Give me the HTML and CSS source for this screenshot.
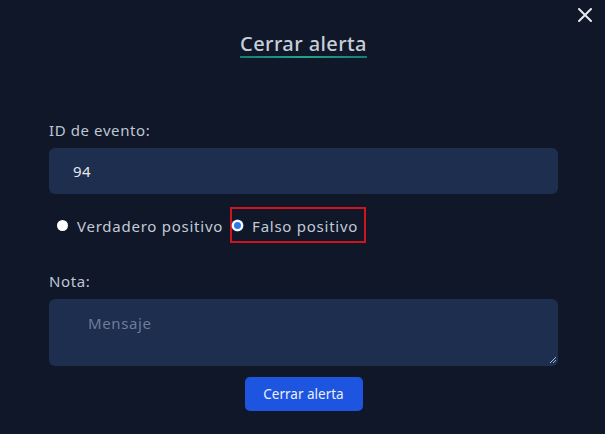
FILE: index.html
```html
<!DOCTYPE html>
<html lang="es">
<head>
<meta charset="utf-8">
<link rel="stylesheet" href="styles.css">
</head>
<body>
<div class="modal">
  <button class="close" aria-label="Cerrar">
    <svg width="14" height="14" viewBox="0 0 14 14"><path d="M1 1L13 13M13 1L1 13" stroke="#e6e9ef" stroke-width="2" stroke-linecap="round"/></svg>
  </button>
  <h2 class="title">Cerrar alerta</h2>
  <form class="form">
    <label class="label">ID de evento:</label>
    <div class="input">94</div>
    <div class="radios">
      <label class="radio"><span class="dot dot-white"></span>Verdadero positivo</label>
      <label class="radio radio-marked"><span class="dot dot-blue"></span>Falso positivo</label>
    </div>
    <label class="label label-note">Nota:</label>
    <div class="textarea">
      <span class="placeholder">Mensaje</span>
      <svg class="grip" width="8" height="8" viewBox="0 0 8 8"><path d="M7 1L1 7M7 4L4 7" stroke="#a9b3c6" stroke-width="1"/></svg>
    </div>
    <div class="actions">
      <button type="button" class="btn">Cerrar alerta</button>
    </div>
  </form>
</div>
</body>
</html>
```
FILE: styles.css
```css
* { box-sizing: border-box; }
html, body { margin: 0; padding: 0; }
body {
  width: 605px;
  height: 434px;
  background: #0f1729;
  font-family: "Noto Sans", "Open Sans", sans-serif;
  color: #c9cfda;
  overflow: hidden;
}
.modal {
  position: relative;
  padding: 31px 47px 0 49px;
}
.close {
  position: absolute;
  top: 8px;
  right: 13px;
  width: 14px;
  height: 14px;
  padding: 0;
  border: 0;
  background: none;
  display: flex;
}
.title {
  margin: 0 auto;
  width: max-content;
  font-size: 20px;
  font-weight: 500;
  color: #c8ced8;
  letter-spacing: 0.4px;
  line-height: 25px;
  border-bottom: 2px solid transparent;
  border-image: linear-gradient(90deg, #177d72, #22a38d, #177d72) 1;
}
.form {
  display: flex;
  flex-direction: column;
  margin-top: 62px;
}
.label {
  font-size: 15px;
  line-height: 20px;
  letter-spacing: 0.6px;
  color: #bfc6d2;
}
.input {
  margin-top: 8px;
  height: 46px;
  background: #1e2e4e;
  border-radius: 6px;
  padding: 0 24px;
  display: flex;
  align-items: center;
  font-size: 15px;
  letter-spacing: 0.5px;
  color: #e6e9ee;
}
.radios {
  display: flex;
  align-items: center;
  margin-top: 13px;
  margin-left: 8px;
  height: 36px;
}
.radio {
  display: flex;
  align-items: center;
  gap: 9px;
  font-size: 15px;
  letter-spacing: 0.75px;
  color: #c3cad6;
  height: 36px;
  padding-top: 1px;
}
.radio-marked {
  margin-left: 7px;
  border: 2px solid #d0141d;
  padding: 1px 6px 0 0;
  gap: 9px;
}
.dot {
  width: 11px;
  height: 11px;
  border-radius: 50%;
  flex: none;
}
.dot-white { background: #ffffff; }
.dot-blue {
  background: #2a7be8;
  border: 2px solid #ffffff;
  box-shadow: 0 0 0 0.5px #9fc0ef;
}
.label-note { margin-top: 28px; }
.textarea {
  position: relative;
  margin-top: 8px;
  height: 67px;
  background: #1e2e4e;
  border-radius: 6px;
  padding: 14px 39px;
  font-size: 15px;
}
.placeholder {
  color: #6c7c9b;
  letter-spacing: 0.6px;
}
.grip {
  position: absolute;
  right: 1px;
  bottom: 2px;
}
.actions {
  display: flex;
  justify-content: center;
  margin-top: 11px;
}
.btn {
  width: 118px;
  height: 34px;
  border: 0;
  border-radius: 5px;
  background: #1d54e0;
  color: #ecf0fb;
  font-family: inherit;
  font-size: 13.5px;
}
```
